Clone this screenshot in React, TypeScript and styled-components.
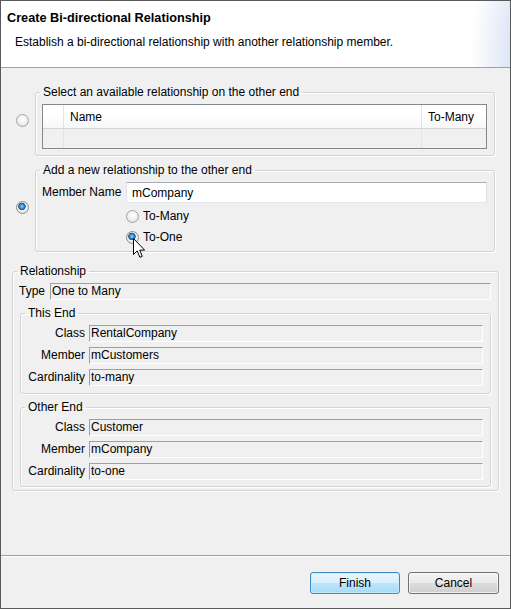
import React from "react";
import styled, { createGlobalStyle } from "styled-components";

const Global = createGlobalStyle`
  html, body { margin: 0; padding: 0; background: #f0f0f0; }
  body {
    font-family: "Liberation Sans", Arial, sans-serif;
    font-size: 12px;
    color: #000;
  }
  * { box-sizing: border-box; }
`;

const Window = styled.div`
  position: relative;
  width: 511px;
  height: 609px;
  border: 1px solid #5a5a5a;
  background: #f0f0f0;
  display: flex;
  flex-direction: column;
  overflow: hidden;
`;

const Header = styled.header`
  height: 67px;
  flex: none;
  padding: 9px 0 0 6px;
  border-bottom: 1px solid #a0a0a0;
  background:
    radial-gradient(ellipse 80px 140px at 108% 75%, #c6d5ee 0%, #d9e3f4 45%, rgba(255,255,255,0) 100%),
    #ffffff;
`;

const Title = styled.h1`
  margin: 0;
  font-family: "Liberation Sans", Arial, sans-serif;
  font-weight: bold;
  font-size: 12.7px;
  line-height: 16px;
`;

const Subtitle = styled.p`
  margin: 9px 0 0 8px;
  font-size: 12px;
  line-height: 15px;
`;

const Body = styled.main`
  flex: 1;
  display: flex;
  flex-direction: column;
  padding-top: 17px;
`;

const ChoiceRow = styled.div<{ $gap: number }>`
  display: flex;
  align-items: center;
  gap: 6px;
  padding: 0 15px;
  margin-bottom: ${(p) => p.$gap}px;
`;

const Radio = styled.input.attrs({ type: "radio" })`
  appearance: none;
  -webkit-appearance: none;
  margin: 0;
  flex: none;
  width: 13px;
  height: 13px;
  border-radius: 50%;
  border: 1px solid #a4a4a4;
  background: radial-gradient(circle at 50% 40%, #ffffff 0%, #f2f2f2 45%, #d9d9d9 100%);
  &:checked {
    border-color: #8e8f8f;
    background:
      radial-gradient(circle at 45% 40%, #9fd7fb 0px, #3a8fd0 2px, #17568f 3.4px, rgba(0,0,0,0) 4.1px),
      radial-gradient(circle at 50% 40%, #ffffff 0%, #f2f2f2 45%, #d9d9d9 100%);
  }
`;

const Group = styled.fieldset<{ $pt?: number; $pb: number; $pr?: number; $ml?: number }>`
  margin: 0 0 0 ${(p) => p.$ml ?? 0}px;
  min-width: 0;
  flex: 1;
  border: 1px solid #d3d3d3;
  border-radius: 3px;
  box-shadow: 1px 1px 0 #ffffff, inset 1px 1px 0 #ffffff;
  padding: ${(p) => p.$pt ?? 5}px ${(p) => p.$pr ?? 7}px ${(p) => p.$pb}px 6px;
`;

const Legend = styled.legend`
  padding: 0 3px;
  margin-left: -2px;
  line-height: 14px;
  font-size: 12px;
`;

const Table = styled.div`
  border: 1px solid #828790;
  display: grid;
  grid-template-columns: 21px 358px 1fr;
  grid-template-rows: 24px 19px;
  background: #f0f0f0;
`;

const HeadCell = styled.div<{ $last?: boolean }>`
  background: linear-gradient(#ffffff 0%, #ffffff 45%, #f6f7f8 100%);
  border-bottom: 1px solid #d5d5d5;
  border-right: ${(p) => (p.$last ? "none" : "1px solid #e2e3e5")};
  padding-left: 6px;
  display: flex;
  align-items: center;
  padding-top: 1px;
`;

const BodyCell = styled.div<{ $last?: boolean }>`
  border-right: ${(p) => (p.$last ? "none" : "1px solid #e4e4e4")};
  background: #f0f0f0;
`;

const NewGrid = styled.div`
  display: grid;
  grid-template-columns: 80px 1fr;
  column-gap: 4px;
  grid-template-rows: 21px 3px 21px 21px;
  align-items: center;
`;

const FieldLabel = styled.label`
  grid-column: 1;
  line-height: 15px;
`;

const TextInput = styled.input`
  grid-column: 2;
  height: 21px;
  width: 100%;
  margin: 0;
  font: inherit;
  padding: 0 5px;
  border: 1px solid #abadb3;
  border-color: #abadb3 #dbdfe6 #e3e9ef #e2e3ea;
  background: #fff;
  outline: none;
`;

const RadioOption = styled.label<{ $row: number }>`
  grid-column: 2;
  grid-row: ${(p) => p.$row};
  display: flex;
  align-items: center;
  gap: 4px;
  line-height: 15px;
`;

const InfoRow = styled.div<{ $cols: string; $gap?: number }>`
  display: grid;
  grid-template-columns: ${(p) => p.$cols};
  column-gap: 4px;
  align-items: center;
  margin-bottom: ${(p) => p.$gap ?? 0}px;
`;

const InfoLabel = styled.span<{ $right?: boolean }>`
  text-align: ${(p) => (p.$right ? "right" : "left")};
  line-height: 15px;
  white-space: nowrap;
`;

const ReadField = styled.div`
  height: 17px;
  line-height: 15px;
  padding-left: 1px;
  background: #f0f0f0;
  border-top: 1px solid #a0a0a0;
  border-left: 1px solid #a0a0a0;
  border-right: 1px solid #ffffff;
  border-bottom: 1px solid #ffffff;
  white-space: nowrap;
`;

const RelGroupWrap = styled.div`
  display: flex;
  margin: 12px 11px 0 11px;
`;

const SubGroups = styled.div`
  display: flex;
  flex-direction: column;
  gap: 6px;
  margin-top: 6px;
`;

const Footer = styled.footer`
  flex: none;
  height: 53px;
  border-top: 1px solid #a0a0a0;
  box-shadow: inset 0 1px 0 #ffffff;
  display: flex;
  justify-content: flex-end;
  align-items: flex-start;
  gap: 8px;
  padding: 16px 11px 0 0;
`;

const Button = styled.button<{ $primary?: boolean; $w: number }>`
  width: ${(p) => p.$w}px;
  height: 22px;
  margin: 0;
  padding: 0;
  font: inherit;
  color: #000;
  border-radius: 3px;
  border: 1px solid ${(p) => (p.$primary ? "#3d8cc7" : "#707070")};
  box-shadow: inset 0 0 0 1px ${(p) => (p.$primary ? "rgba(200,235,252,0.9)" : "rgba(255,255,255,0.7)")};
  background: ${(p) =>
    p.$primary
      ? "linear-gradient(#eaf6fd 0%, #d9f0fc 50%, #bee6fd 50%, #a7d9f5 100%)"
      : "linear-gradient(#f2f2f2 0%, #ebebeb 50%, #dddddd 50%, #cfcfcf 100%)"};
`;

const Cursor = styled.svg`
  position: absolute;
  left: 131px;
  top: 236px;
  width: 14px;
  height: 22px;
  pointer-events: none;
`;

type Row = [string, string];

const EndGroup: React.FC<{ title: string; rows: Row[]; pb: number }> = ({ title, rows, pb }) => (
  <Group $pb={pb} $ml={1}>
    <Legend>{title}</Legend>
    {rows.map(([l, v], i) => (
      <InfoRow key={l} $cols="58px 1fr" $gap={i < rows.length - 1 ? 5 : 0}>
        <InfoLabel $right>{l}</InfoLabel>
        <ReadField>{v}</ReadField>
      </InfoRow>
    ))}
  </Group>
);

export default function App() {
  return (
    <>
      <Global />
      <Window>
        <Header>
          <Title>Create Bi-directional Relationship</Title>
          <Subtitle>Establish a bi-directional relationship with another relationship member.</Subtitle>
        </Header>
        <Body>
          <ChoiceRow $gap={7}>
            <Radio name="mode" />
            <Group $pb={6}>
              <Legend>Select an available relationship on the other end</Legend>
              <Table>
                <HeadCell />
                <HeadCell>Name</HeadCell>
                <HeadCell $last>To-Many</HeadCell>
                <BodyCell />
                <BodyCell />
                <BodyCell $last />
              </Table>
            </Group>
          </ChoiceRow>
          <ChoiceRow $gap={0}>
            <Radio name="mode" defaultChecked />
            <Group $pb={3}>
              <Legend>Add a new relationship to the other end</Legend>
              <NewGrid>
                <FieldLabel htmlFor="member">Member Name</FieldLabel>
                <TextInput id="member" defaultValue="mCompany" />
                <RadioOption $row={3}>
                  <Radio name="card" />
                  To-Many
                </RadioOption>
                <RadioOption $row={4}>
                  <Radio name="card" defaultChecked />
                  To-One
                </RadioOption>
              </NewGrid>
            </Group>
          </ChoiceRow>
          <RelGroupWrap>
            <Group $pb={3}>
              <Legend>Relationship</Legend>
              <InfoRow $cols="27px 1fr">
                <InfoLabel>Type</InfoLabel>
                <ReadField>One to Many</ReadField>
              </InfoRow>
              <SubGroups>
                <EndGroup
                  title="This End"
                  pb={7}
                  rows={[
                    ["Class", "RentalCompany"],
                    ["Member", "mCustomers"],
                    ["Cardinality", "to-many"],
                  ]}
                />
                <EndGroup
                  title="Other End"
                  pb={6}
                  rows={[
                    ["Class", "Customer"],
                    ["Member", "mCompany"],
                    ["Cardinality", "to-one"],
                  ]}
                />
              </SubGroups>
            </Group>
          </RelGroupWrap>
        </Body>
        <Footer>
          <Button $primary $w={90}>Finish</Button>
          <Button $w={91}>Cancel</Button>
        </Footer>
        <Cursor viewBox="0 0 14 22">
          <path
            d="M1.5 1.5 L1.5 17.5 L5.2 13.9 L7.9 20.3 L10.3 19.3 L7.7 13.1 L12.6 13.1 Z"
            fill="#ffffff"
            stroke="#000000"
            strokeWidth="1"
            strokeLinejoin="miter"
          />
        </Cursor>
      </Window>
    </>
  );
}
